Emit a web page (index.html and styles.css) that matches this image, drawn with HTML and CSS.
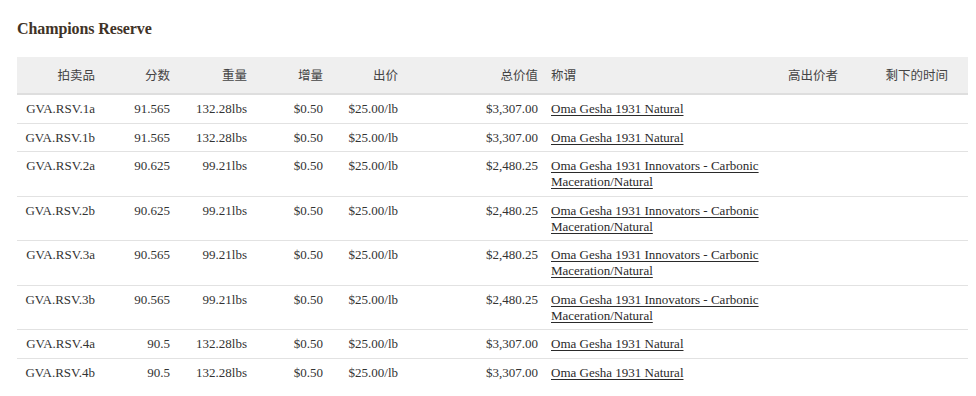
FILE: index.html
```html
<!DOCTYPE html>
<html lang="zh">
<head>
<meta charset="utf-8">
<title>Champions Reserve</title>
<link rel="stylesheet" href="styles.css">
</head>
<body>
<main class="page">
  <h2 class="title">Champions Reserve</h2>
  <table class="lots">
    <colgroup>
      <col class="c-lot"><col class="c-score"><col class="c-weight"><col class="c-inc"><col class="c-bid"><col class="c-total"><col class="c-name"><col class="c-high"><col class="c-time">
    </colgroup>
    <thead>
      <tr>
        <th class="r">拍卖品</th><th class="r">分数</th><th class="r">重量</th><th class="r">增量</th><th class="r">出价</th><th class="r">总价值</th><th class="l">称谓</th><th class="r">高出价者</th><th class="r last">剩下的时间</th>
      </tr>
    </thead>
    <tbody>
      <tr><td class="r">GVA.RSV.1a</td><td class="r">91.565</td><td class="r">132.28lbs</td><td class="r">$0.50</td><td class="r">$25.00/lb</td><td class="r">$3,307.00</td><td class="l"><a href="#">Oma Gesha 1931 Natural</a></td><td></td><td class="last"></td></tr>
      <tr><td class="r">GVA.RSV.1b</td><td class="r">91.565</td><td class="r">132.28lbs</td><td class="r">$0.50</td><td class="r">$25.00/lb</td><td class="r">$3,307.00</td><td class="l"><a href="#">Oma Gesha 1931 Natural</a></td><td></td><td class="last"></td></tr>
      <tr><td class="r">GVA.RSV.2a</td><td class="r">90.625</td><td class="r">99.21lbs</td><td class="r">$0.50</td><td class="r">$25.00/lb</td><td class="r">$2,480.25</td><td class="l"><a href="#">Oma Gesha 1931 Innovators - Carbonic Maceration/Natural</a></td><td></td><td class="last"></td></tr>
      <tr><td class="r">GVA.RSV.2b</td><td class="r">90.625</td><td class="r">99.21lbs</td><td class="r">$0.50</td><td class="r">$25.00/lb</td><td class="r">$2,480.25</td><td class="l"><a href="#">Oma Gesha 1931 Innovators - Carbonic Maceration/Natural</a></td><td></td><td class="last"></td></tr>
      <tr><td class="r">GVA.RSV.3a</td><td class="r">90.565</td><td class="r">99.21lbs</td><td class="r">$0.50</td><td class="r">$25.00/lb</td><td class="r">$2,480.25</td><td class="l"><a href="#">Oma Gesha 1931 Innovators - Carbonic Maceration/Natural</a></td><td></td><td class="last"></td></tr>
      <tr><td class="r">GVA.RSV.3b</td><td class="r">90.565</td><td class="r">99.21lbs</td><td class="r">$0.50</td><td class="r">$25.00/lb</td><td class="r">$2,480.25</td><td class="l"><a href="#">Oma Gesha 1931 Innovators - Carbonic Maceration/Natural</a></td><td></td><td class="last"></td></tr>
      <tr><td class="r">GVA.RSV.4a</td><td class="r">90.5</td><td class="r">132.28lbs</td><td class="r">$0.50</td><td class="r">$25.00/lb</td><td class="r">$3,307.00</td><td class="l"><a href="#">Oma Gesha 1931 Natural</a></td><td></td><td class="last"></td></tr>
      <tr><td class="r">GVA.RSV.4b</td><td class="r">90.5</td><td class="r">132.28lbs</td><td class="r">$0.50</td><td class="r">$25.00/lb</td><td class="r">$3,307.00</td><td class="l"><a href="#">Oma Gesha 1931 Natural</a></td><td></td><td class="last"></td></tr>
    </tbody>
  </table>
</main>
</body>
</html>
```

FILE: styles.css
```css
html, body {
  margin: 0;
  padding: 0;
  background: #ffffff;
}
.page {
  padding: 20px 8px 0 17px;
  font-family: "Liberation Serif", "Noto Sans CJK SC", serif;
  color: #333333;
}
.title {
  margin: 0 0 19px 0;
  font-size: 16px;
  line-height: 18px;
  font-weight: bold;
  color: #3f3327;
  letter-spacing: -0.1px;
}
.lots {
  width: 951px;
  table-layout: fixed;
  border-collapse: collapse;
  font-size: 13px;
  line-height: 16px;
}
.c-lot { width: 84px; }
.c-score { width: 75px; }
.c-weight { width: 77px; }
.c-inc { width: 76px; }
.c-bid { width: 75px; }
.c-total { width: 140px; }
.c-name { width: 236px; }
.c-high { width: 64px; }
.c-time { width: 124px; }
.lots th {
  background: #efefef;
  height: 36px;
  padding: 0 6px;
  font-family: "Noto Sans CJK SC", sans-serif;
  font-weight: normal;
  font-size: 12.5px;
  color: #444444;
  border-bottom: 2px solid #dedede;
  vertical-align: middle;
  white-space: nowrap;
}
.lots td {
  padding: 6px 6px 5.5px 6px;
  vertical-align: top;
  border-bottom: 1px solid #e2e2e2;
  white-space: normal;
}
.lots tbody tr:last-child td {
  border-bottom: none;
}
.lots .r { text-align: right; }
.lots .l { text-align: left; padding-left: 7px; }
.lots .last { padding-right: 20px; }
.lots a {
  color: #2a2a2a;
  text-decoration: underline;
  text-underline-offset: 2px;
}
```
